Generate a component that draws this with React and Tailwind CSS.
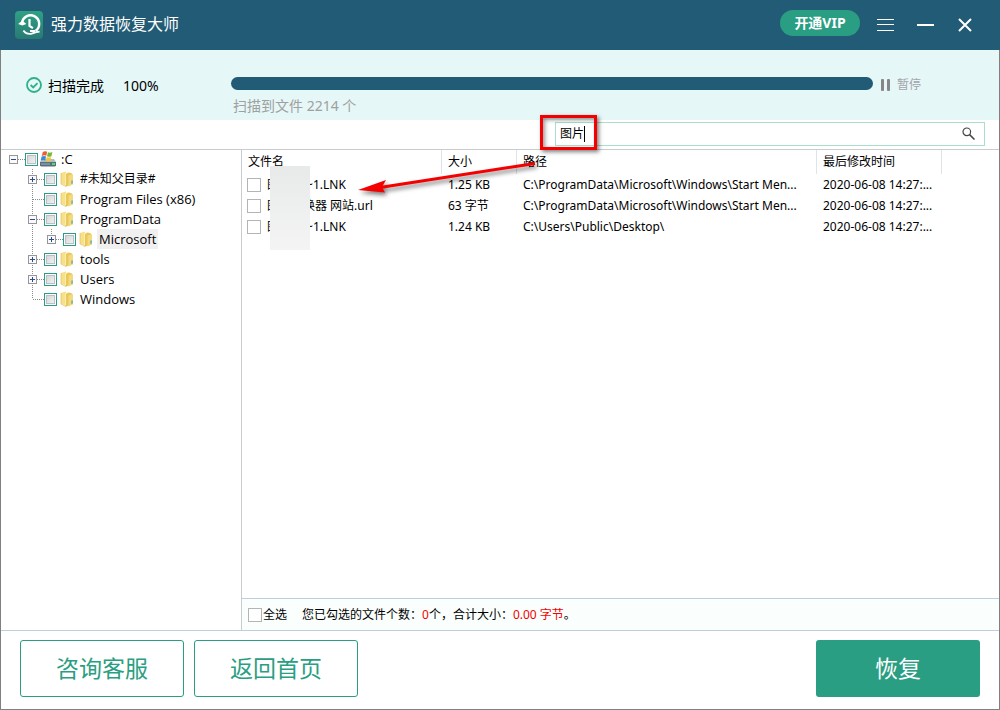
import { useState } from "react";

const TREE = [
  { name: ":C", level: 0, toggle: "minus", drive: true },
  { name: "#未知父目录#", level: 1, toggle: "plus", small: true },
  { name: "Program Files (x86)", level: 1 },
  { name: "ProgramData", level: 1, toggle: "minus" },
  { name: "Microsoft", level: 2, toggle: "plus", last: true, selected: true },
  { name: "tools", level: 1, toggle: "plus" },
  { name: "Users", level: 1, toggle: "plus" },
  { name: "Windows", level: 1, last: true },
];

const FILES = [
  {
    name: "图片转 ~1.LNK",
    size: "1.25 KB",
    path: "C:\\ProgramData\\Microsoft\\Windows\\Start Men...",
    time: "2020-06-08 14:27:...",
  },
  {
    name: "图片转换器 网站.url",
    size: "63 字节",
    path: "C:\\ProgramData\\Microsoft\\Windows\\Start Men...",
    time: "2020-06-08 14:27:...",
  },
  {
    name: "图片转 ~1.LNK",
    size: "1.24 KB",
    path: "C:\\Users\\Public\\Desktop\\",
    time: "2020-06-08 14:27:...",
  },
];

// =========================
// ICONS
// =========================
function LogoIcon() {
  return (
    <svg width="28" height="28" viewBox="0 0 28 28" fill="none">
      <defs>
        <linearGradient id="logo" x1="0" y1="0" x2="0" y2="1">
          <stop offset="0" stopColor="#2fa184" />
          <stop offset="1" stopColor="#287a74" />
        </linearGradient>
      </defs>
      <rect width="28" height="28" rx="4" fill="url(#logo)" />
      <path d="M7 12.5A8.600 8.600 0 1 1 20.500 20" stroke="#fff" strokeWidth="2.400" />
      <path d="M3.200 13l4-3.600 4.200 3.600-4.200 1.600z" fill="#fff" />
      <path d="M14.500 8v7l3.400 2.200" stroke="#fff" strokeWidth="2.200" />
      <path d="M8.400 19.500c1.600 2.400 4.200 3.700 7.400 3.400 2.400-.4 3.600-2 8.800-2.200M15 20l5-.2" stroke="#fff" strokeWidth="1.800" />
    </svg>
  );
}

function FolderIcon() {
  return (
    <svg width="16" height="16" viewBox="-1 0 16 16">
      <path d="M1 2l5-1.500v14L1 13z" fill="#f6e08a" />
      <path d="M5 2.200L9 1v12.500L5 15.500z" fill="#fbeeb0" />
      <path d="M6 3l3-1.500 3 1v11l-6 2z" fill="#e9c75a" />
      <path d="M8.500 4.500L13 3v10.500l-4.500 2z" fill="#f3da80" />
      <path d="M1 2v11l5 2.500V14" fill="none" stroke="#d9b94f" strokeWidth=".6" />
      <path d="M11.400 9.500h1.300v3l-1.300.4z" fill="#5fa9a0" />
    </svg>
  );
}

function DriveIcon() {
  return (
    <svg width="16" height="16" viewBox="0 0 16 16">
      <path d="M2 8h12l2 3H0z" fill="#b4bcc2" />
      <path d="M0 11h16v3.500l-1 1H1l-1-1z" fill="#5a6f7c" />
      <path d="M1 12.500h9v1H1z" fill="#8fb4c8" />
      <path d="M12 12h3v2h-3z" fill="#4be06a" />
      <path d="M2.800 1Q5-.4 7.200 .8L6.300 4.800Q4.400 3.800 1.800 5z" fill="#e8602c" />
      <path d="M8 1.200Q9.800 2.200 12.400 1L11.400 5.200Q9 6.200 7 5.200z" fill="#74b83a" />
      <path d="M1.600 5.600Q4.200 4.400 6.100 5.500L5.200 9.400Q3.200 8.400 .6 9.600z" fill="#3c8ad8" />
      <path d="M6.800 6Q8.800 7 11.200 6L10.200 10Q8 10.800 5.900 9.800z" fill="#f6c72c" />
    </svg>
  );
}

// Dotted guide lines with the plus / minus box
function Branch({ item }) {
  const dots = { stroke: "#8a8a8a", strokeDasharray: "1 1", fill: "none" };
  return (
    <svg width="16" height="20" viewBox="0 0 16 20">
      {item.level > 0 && <path d={item.last ? "M4.5 0v10" : "M4.5 0v20"} {...dots} />}
      <path d="M5 10.500h11" {...dots} />
      {item.toggle && (
        <>
          <rect x=".5" y="6.500" width="8" height="8" fill="#fafafa" stroke="#969696" />
          <path d="M2 10.500h5" stroke="#2b4a9a" />
          {item.toggle === "plus" && <path d="M4.500 8v5" stroke="#2b4a9a" />}
        </>
      )}
    </svg>
  );
}

function TreeRow({ item }) {
  return (
    <li className="flex h-5 items-center">
      {item.level > 0 && <span className="w-[19px] shrink-0" />}
      {item.level > 1 && (
        <svg width="19" height="20" viewBox="0 0 19 20">
          <path d="M4.500 0v20" stroke="#8a8a8a" strokeDasharray="1 1" />
        </svg>
      )}
      {item.toggle ? (
        <button type="button" aria-label={`展开 ${item.name}`}>
          <Branch item={item} />
        </button>
      ) : (
        <Branch item={item} />
      )}
      <label className="flex items-center">
        <input
          type="checkbox"
          className="size-[13px] appearance-none border border-[#2a9e82] bg-linear-to-br from-[#cdd0d4] to-[#f8f8f8] shadow-[inset_0_0_0_1px_#fff,inset_0_0_0_2px_#bcc0c4] checked:bg-[#2a9e82]"
        />
        <span className="ml-[2px]">{item.drive ? <DriveIcon /> : <FolderIcon />}</span>
        <span
          className={`ml-[3px] px-[2px] leading-5 ${item.small ? "text-xs" : "text-[13px]"} ${
            item.selected ? "bg-[#f0f0f0]" : ""
          }`}
        >
          {item.name}
        </span>
      </label>
    </li>
  );
}

function HeadCell({ children }) {
  return (
    <th className="h-6 border-r border-[#e0e4e8] p-0 pl-[6px] text-left font-normal">
      {children}
    </th>
  );
}

const CHECKBOX =
  "size-[14px] shrink-0 appearance-none border border-[#b4b4b4] bg-white checked:bg-[#2a9e82]";

export default function App() {
  const [keyword, setKeyword] = useState("图片");

  return (
    <div className="flex min-h-screen flex-col bg-white font-['Noto_Sans','Noto_Sans_CJK_SC',sans-serif] text-xs text-black">
      {/* TITLE BAR */}
      <header className="flex h-[50px] items-center bg-[#225b75] pr-7 pl-[15px] text-white">
        <LogoIcon />
        <h1 className="mb-[2px] ml-2 flex-1 text-base">强力数据恢复大师</h1>
        <button
          type="button"
          className="mb-1 h-[26px] w-20 rounded-full bg-[#2a9e82] text-sm font-bold"
        >
          开通VIP
        </button>
        <button type="button" aria-label="菜单" className="ml-[17px]">
          <svg width="17" height="12" viewBox="0 0 17 12">
            <path d="M0 .5h17M0 5.500h17M0 11.500h17" stroke="#fff" />
          </svg>
        </button>
        <button type="button" aria-label="最小化" className="ml-[23px]">
          <svg width="17" height="2" viewBox="0 0 17 2">
            <path d="M0 1h17" stroke="#fff" strokeWidth="2" />
          </svg>
        </button>
        <button type="button" aria-label="关闭" className="ml-6">
          <svg width="14" height="14" viewBox="0 0 14 14">
            <path d="M1 1l12 12M13 1L1 13" stroke="#fff" strokeWidth="2" />
          </svg>
        </button>
      </header>

      <div className="flex flex-1 flex-col border-x border-b border-[#808080]">
        {/* SCAN STATUS */}
        <section className="flex h-[70px] bg-[#e5f7f7] pr-[78px] pl-[25px]">
          <div className="flex h-[70px] w-[205px] shrink-0 items-center text-sm">
            <svg width="16" height="16" viewBox="0 0 16 16" fill="none" stroke="#2fb08c">
              <circle cx="8" cy="8" r="7" strokeWidth="1.800" />
              <path d="M4.600 8l2.600 2.500 4.300-4.300" strokeWidth="1.800" />
            </svg>
            <span className="mt-[2px] ml-[6px]">扫描完成</span>
            <span className="mt-[2px] ml-[19px]">100%</span>
          </div>
          <div className="flex-1 pt-[27px]">
            <div
              role="progressbar"
              aria-valuenow={100}
              aria-label="扫描进度"
              className="h-[13px] rounded-full bg-[#225b75]"
            />
            <p className="mt-[6px] pl-[2px] text-sm leading-5 text-[#a0a0a0]">
              扫描到文件 2214 个
            </p>
          </div>
          <button
            type="button"
            className="mt-[27px] ml-2 flex h-4 items-center gap-[7px] text-[#a3a3ab]"
          >
            <svg width="9" height="12" viewBox="0 0 9 12" fill="#868686">
              <rect width="3" height="12" rx="1" />
              <rect x="6" width="3" height="12" rx="1" />
            </svg>
            暂停
          </button>
        </section>

        {/* SEARCH */}
        <div className="flex h-[30px] items-start justify-end border-b border-[#c8cccf] pt-[2px] pr-[14px]">
          <div className="relative flex h-6 w-[430px] items-center border border-[#a9dfcb] pr-[9px] pl-1">
            <input
              type="text"
              aria-label="搜索"
              value={keyword}
              onChange={(e) => setKeyword(e.target.value)}
              className="min-w-0 flex-1 bg-transparent outline-none"
            />
            <button type="button" aria-label="搜索" className="mb-[2px]">
              <svg width="13" height="13" viewBox="0 0 13 13" fill="none" stroke="#444">
                <circle cx="4.800" cy="4.800" r="3.800" strokeWidth="1.200" />
                <path d="M7.600 7.600L12.500 12.500" strokeWidth="1.500" />
              </svg>
            </button>
            {/* text cursor */}
            <span className="absolute top-[3px] left-7 h-4 w-px bg-black" />
            {/* red highlight */}
            <span className="absolute -top-2 -left-4 h-[35px] w-[57px] border-3 border-[#f40000] shadow-[2px_2px_4px_rgba(0,0,0,0.5),inset_2px_2px_4px_rgba(0,0,0,0.4)]" />
          </div>
        </div>

        {/* MAIN */}
        <main className="flex flex-1">
          {/* FOLDER TREE */}
          <nav className="w-[241px] shrink-0 border-r border-[#c8cccf] pl-2 font-['Open_Sans','Noto_Sans_CJK_SC',sans-serif]">
            <ul className="-mt-px">
              {TREE.map((item) => (
                <TreeRow key={item.name} item={item} />
              ))}
            </ul>
          </nav>

          <section className="relative flex min-w-0 flex-1 flex-col">
            {/* FILE LIST */}
            <div className="flex-1">
              <table className="w-full table-fixed border-separate border-spacing-0">
                <colgroup>
                  <col className="w-[200px]" />
                  <col className="w-[75px]" />
                  <col className="w-[300px]" />
                  <col className="w-[125px]" />
                  <col />
                </colgroup>
                <thead>
                  <tr>
                    <HeadCell>文件名</HeadCell>
                    <HeadCell>大小</HeadCell>
                    <HeadCell>路径</HeadCell>
                    <HeadCell>最后修改时间</HeadCell>
                    <td />
                  </tr>
                </thead>
                <tbody>
                  {FILES.map((file, index) => (
                    <tr key={index} className="h-[21px] whitespace-nowrap">
                      <td className="pl-[5px]">
                        <label className="flex items-center gap-[6px]">
                          <input type="checkbox" className={CHECKBOX} />
                          {file.name}
                        </label>
                      </td>
                      <td className="pl-[6px]">{file.size}</td>
                      <td className="pl-[6px]">{file.path}</td>
                      <td className="pl-[6px]">{file.time}</td>
                      <td />
                    </tr>
                  ))}
                </tbody>
              </table>
            </div>

            {/* masked names */}
            <div className="absolute top-4 left-7 h-[84px] w-10 bg-linear-to-b from-[#e8eaea] to-[#f4f4f4]" />

            {/* arrow from the search box to the result */}
            <svg
              className="pointer-events-none absolute top-0 left-[110px] drop-shadow-[2px_3px_2px_rgba(0,0,0,0.5)]"
              width="210"
              height="56"
              viewBox="0 0 210 56"
            >
              <path d="M30 37l3 5.500L6 40l28-10z" fill="#f40000" />
              <path d="M183 13.500L28 37.500" stroke="#f40000" strokeWidth="3" />
            </svg>

            {/* SELECTION SUMMARY */}
            <div className="flex h-8 items-center border-t border-[#bccfdb] bg-[#fafffe] pl-[6px]">
              <label className="flex items-center gap-px">
                <input type="checkbox" className={CHECKBOX} />
                全选
              </label>
              <p className="mt-px ml-[15px]">
                您已勾选的文件个数：<span className="text-[#f40000]">0</span>个，合计大小：
                <span className="text-[#f40000]">0.00 字节</span>。
              </p>
            </div>
          </section>
        </main>

        {/* ACTIONS */}
        <footer className="flex gap-[10px] border-t border-[#bccfdb] px-[19px] pt-[9px] pb-3 text-[23px]">
          <button
            type="button"
            className="h-[57px] w-[164px] rounded-[3px] border border-[#2a9e82] text-[#2a9e82]"
          >
            咨询客服
          </button>
          <button
            type="button"
            className="h-[57px] w-[164px] rounded-[3px] border border-[#2a9e82] text-[#2a9e82]"
          >
            返回首页
          </button>
          <button
            type="button"
            className="ml-auto h-[57px] w-[164px] rounded-[3px] bg-[#2a9e82] text-white"
          >
            恢复
          </button>
        </footer>
      </div>
    </div>
  );
}
